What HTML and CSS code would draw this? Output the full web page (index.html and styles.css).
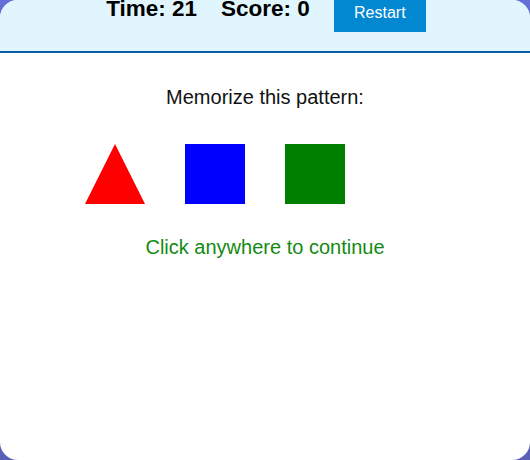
FILE: index.html
```html
<!DOCTYPE html>
<html>
<head>
<meta charset="utf-8">
<link rel="stylesheet" href="styles.css">
</head>
<body>
<div class="game">
  <header class="bar">
    <div class="bar-row">
      <span class="stat">Time: 21</span>
      <span class="stat">Score: 0</span>
      <button class="restart">Restart</button>
    </div>
  </header>
  <main class="stage">
    <p class="prompt">Memorize this pattern:</p>
    <div class="shapes">
      <div class="slot"><div class="triangle"></div></div>
      <div class="slot"><div class="square blue"></div></div>
      <div class="slot"><div class="square green"></div></div>
      <div class="slot"></div>
    </div>
    <p class="hint">Click anywhere to continue</p>
  </main>
</div>
</body>
</html>
```
FILE: styles.css
```css
html, body {
  margin: 0;
  padding: 0;
}
body {
  width: 530px;
  height: 460px;
  background: linear-gradient(180deg, #6570d6 0%, #5a5fb6 100%);
  font-family: "Liberation Sans", Arial, sans-serif;
  overflow: hidden;
}
.game {
  width: 530px;
  height: 460px;
  background: #ffffff;
  border-radius: 18px;
  overflow: hidden;
  display: flex;
  flex-direction: column;
}
.bar {
  height: 51px;
  background: #e1f5fe;
  border-bottom: 2px solid #0a5ea8;
  flex: none;
}
.bar-row {
  display: flex;
  justify-content: center;
  align-items: flex-start;
  gap: 24px;
  margin-top: -7px;
  padding-left: 2px;
}
.stat {
  font-size: 22.5px;
  font-weight: bold;
  line-height: 25px;
  color: #000;
  margin-top: 3px;
}
.restart {
  font-family: "Liberation Sans", Arial, sans-serif;
  font-size: 16px;
  line-height: 18px;
  padding: 10px 20px;
  background: #0288d1;
  color: #fff;
  border: none;
  border-radius: 0;
  width: 92px;
  height: 39px;
}
.stage {
  padding-top: 33px;
  text-align: center;
}
.prompt {
  margin: 0;
  font-size: 20px;
  line-height: 23px;
  color: #111;
}
.shapes {
  display: flex;
  justify-content: center;
  gap: 40px;
  margin-top: 35px;
  height: 60px;
}
.slot {
  width: 60px;
  height: 60px;
}
.triangle {
  width: 0;
  height: 0;
  border-left: 30px solid transparent;
  border-right: 30px solid transparent;
  border-bottom: 60px solid #ff0000;
}
.square {
  width: 60px;
  height: 60px;
}
.blue { background: #0000ff; }
.green { background: #008000; }
.hint {
  margin: 32px 0 0;
  font-size: 20px;
  line-height: 23px;
  color: #138a13;
}
```
